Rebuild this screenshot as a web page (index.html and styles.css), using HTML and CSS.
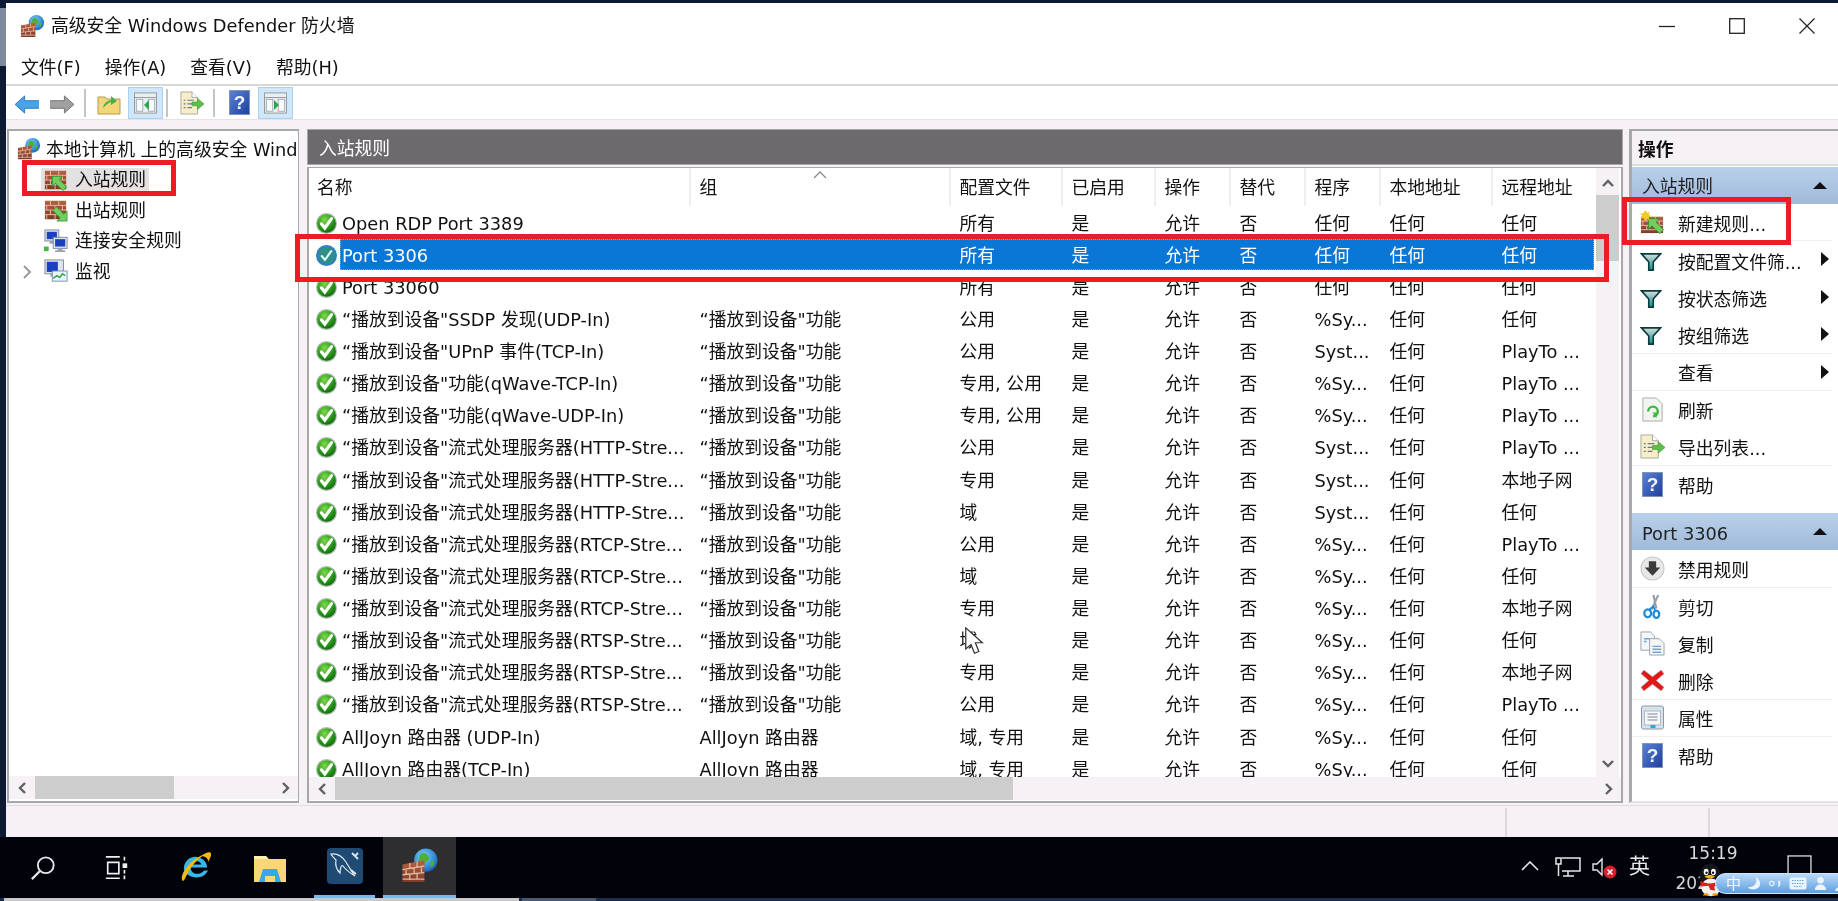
FILE: index.html
```html
<!DOCTYPE html>
<html lang="zh-CN">
<head>
<meta charset="utf-8">
<title>高级安全 Windows Defender 防火墙</title>
<link rel="stylesheet" href="styles.css">
</head>
<body>
<svg class="defs" width="0" height="0" aria-hidden="true">
  <defs>
    <radialGradient id="gc" cx="40%" cy="30%" r="75%"><stop offset="0" stop-color="#7fd84a"/><stop offset=".6" stop-color="#259a18"/><stop offset="1" stop-color="#0f6410"/></radialGradient>
    <radialGradient id="gg" cx="40%" cy="35%" r="70%"><stop offset="0" stop-color="#7fd6f0"/><stop offset=".7" stop-color="#2f86d8"/><stop offset="1" stop-color="#1c5aa8"/></radialGradient>
    <linearGradient id="gb" x1="0" y1="0" x2="0" y2="1"><stop offset="0" stop-color="#b9603f"/><stop offset="1" stop-color="#7c3b28"/></linearGradient>
    <linearGradient id="gh" x1="0" y1="0" x2="1" y2="1"><stop offset="0" stop-color="#5b83d6"/><stop offset="1" stop-color="#1d3f9c"/></linearGradient>
    <linearGradient id="gf" x1="0" y1="0" x2="0" y2="1"><stop offset="0" stop-color="#d8dfe0"/><stop offset="1" stop-color="#0f8a8a"/></linearGradient>
    <symbol id="check" viewBox="0 0 20 20">
      <circle cx="10" cy="10" r="10" fill="#aebbaa"/><circle cx="10" cy="10" r="8.900" fill="url(#gc)"/>
      <path d="M5.200 10.300l3.200 4 6.400-9" fill="none" stroke="#fff" stroke-width="3" stroke-linecap="round"/>
    </symbol>
    <symbol id="checksel" viewBox="0 0 20 20">
      <circle cx="10" cy="10" r="10" fill="#2f7fc4"/><circle cx="10" cy="10" r="8" fill="#2f8f88"/>
      <path d="M5.500 10.500l3 3.600 6-8.200" fill="none" stroke="#dff" stroke-width="2" stroke-linecap="round"/>
    </symbol>
    <symbol id="wall" viewBox="0 0 26 26">
      <circle cx="17" cy="9" r="8" fill="url(#gg)"/><path d="M13 5c3-2 5 0 6 2s-2 3-3 5-3 0-4-2z M20 10l3-1-1 4-2 1z" fill="#4fae3a"/>
      <path d="M1 12l15-3v15H1z" fill="url(#gb)"/>
      <path d="M1 15.500l15-2.500M1 19l15-1.500M1 22h15M6 11v4M11 10v4M3.500 15v4M9 14.500v4M14 14v4M6 18.500v4M11 18v4" stroke="#e0b8a2" stroke-width=".9" fill="none"/>
    </symbol>
    <symbol id="wallin" viewBox="0 0 26 26">
      <rect x="1" y="3" width="23" height="20" fill="url(#gb)"/>
      <path d="M1 8h23M1 13h23M1 18h23M7 3v5M16 3v5M3 8v5M12 8v5M20 8v5M7 13v5M16 13v5M3 18v5M12 18v5M20 18v5" stroke="#e4c0ac" stroke-width="1" fill="none"/>
      <path d="M9 9h11l-3.500 3.500 8 8-4 4-8-8L9 20z" fill="#6fd060" stroke="#2c8c2c" stroke-width=".8"/>
    </symbol>
    <symbol id="wallout" viewBox="0 0 26 26">
      <rect x="1" y="3" width="23" height="20" fill="url(#gb)"/>
      <path d="M1 8h23M1 13h23M1 18h23M7 3v5M16 3v5M3 8v5M12 8v5M20 8v5M7 13v5M16 13v5M3 18v5M12 18v5M20 18v5" stroke="#e4c0ac" stroke-width="1" fill="none"/>
      <path d="M25 25H14l3.500-3.500-8-8 4-4 8 8L25 14z" fill="#6fd060" stroke="#2c8c2c" stroke-width=".8"/>
    </symbol>
    <symbol id="wallnew" viewBox="0 0 26 26">
      <rect x="1" y="7" width="23" height="17" fill="url(#gb)"/>
      <path d="M1 11.500h23M1 16h23M1 20.500h23M7 7v4.500M16 7v4.500M3 11.500v4.500M12 11.500v4.500M20 11.500v4.500M7 16v4.500M16 16v4.500" stroke="#e4c0ac" stroke-width="1" fill="none"/>
      <path d="M9 9h11l-3.500 3.500 8 8-4 4-8-8L9 20z" fill="#6fd060" stroke="#2c8c2c" stroke-width=".8"/>
      <path d="M6 0l1.300 3.200L10.500 2 9 5l3 1.500-3 1.200 1 3-3.200-1.500L5 12 4 8.500 1 9l1.500-3L0 4l3.200-.5z" fill="#f5c928"/>
    </symbol>
    <symbol id="pcs" viewBox="0 0 26 26">
      <rect x="1" y="1" width="15" height="12" fill="#dfe6ee" stroke="#7c8694"/><rect x="3" y="3" width="11" height="8" fill="#1b3fc0"/><path d="M6 13h5v3H6z" fill="#9aa4b0"/>
      <rect x="10" y="9" width="15" height="12" fill="#dfe6ee" stroke="#7c8694"/><rect x="12" y="11" width="11" height="8" fill="#1b3fc0"/><path d="M15 21h5v2h3v2H12v-2h3z" fill="#9aa4b0"/>
      <rect x="0" y="19" width="5" height="5" fill="#46b548"/>
    </symbol>
    <symbol id="monitor" viewBox="0 0 26 26">
      <rect x="1" y="1" width="20" height="15" fill="#e0e6ec" stroke="#7c8694"/><rect x="3" y="3" width="12" height="11" fill="#1b3fc0"/><path d="M7 16h8v3H7z" fill="#9aa4b0"/>
      <rect x="9" y="13" width="16" height="11" fill="#eef4fa" stroke="#6a8fb8"/><path d="M10 21l4-3 3 2 3-4 3 2" fill="none" stroke="#2fa84a" stroke-width="1.600"/>
    </symbol>
    <symbol id="help" viewBox="0 0 21 25">
      <rect x=".5" y=".5" width="20" height="24" fill="url(#gh)" stroke="#7f93bd"/>
      <text x="10.500" y="19" font-family="Liberation Sans, sans-serif" font-size="19" font-weight="700" fill="#f1f4fb" text-anchor="middle">?</text>
    </symbol>
    <symbol id="export" viewBox="0 0 26 26">
      <path d="M1 1h12l6 6v18H1z" fill="#f7edc8" stroke="#a8a8a0"/><path d="M13 1v6h6" fill="#fff" stroke="#a8a8a0"/>
      <path d="M4 10h2M4 14h2M4 18h2M8 10h7M8 14h5M8 18h5" stroke="#6c7a86" stroke-width="1.300"/>
      <path d="M13 12h6V8l7 6-7 6v-4h-6z" fill="#5ac04a" stroke="#3f9e3c" stroke-width=".7"/>
    </symbol>
    <symbol id="filter" viewBox="0 0 24 20">
      <path d="M1.500 1h21l-8 9v9h-5v-9z" fill="url(#gf)" stroke="#0c3b3b" stroke-width="1.800"/>
    </symbol>
    <symbol id="refresh" viewBox="0 0 22 26">
      <path d="M1 1h14l6 6v18H1z" fill="#f2f4f2" stroke="#a8aca8"/>
      <path d="M6.500 15a5 5 0 1 1 5 5" fill="none" stroke="#3fb83f" stroke-width="2.500"/><path d="M11 16l5 0-1 6z" fill="#3fb83f"/>
    </symbol>
    <symbol id="disable" viewBox="0 0 24 24">
      <circle cx="12" cy="12" r="11" fill="#e8e8e8" stroke="#c4c4c4"/>
      <path d="M8.500 5h7v6h4l-7.500 8-7.500-8h4z" fill="#3c3c3c"/>
    </symbol>
    <symbol id="cut" viewBox="0 0 22 26">
      <path d="M17 1l-7 15M12 1l3 14" stroke="#9aa0a8" stroke-width="2.200" fill="none"/>
      <ellipse cx="6" cy="20" rx="3.500" ry="4" fill="none" stroke="#1f8bd8" stroke-width="2.400"/><ellipse cx="15" cy="21" rx="3" ry="3.800" fill="none" stroke="#1f8bd8" stroke-width="2.400"/><path d="M8 16l4-3 2 5" fill="none" stroke="#1f8bd8" stroke-width="2"/>
    </symbol>
    <symbol id="copy" viewBox="0 0 26 26">
      <path d="M1 1h10l4 4v15H1z" fill="#f5f6f8" stroke="#9aa0a8"/><path d="M10 8h10l5 5v12H10z" fill="#f5f6f8" stroke="#9aa0a8"/>
      <path d="M4 8h6M4 11h3M13 16h9M13 19h9M13 22h9" stroke="#6fa5d8" stroke-width="1.500"/>
    </symbol>
    <symbol id="del" viewBox="0 0 26 24">
      <path d="M4 1l9 7 9-7 3 4-8 7 8 7-3 4-9-7-9 7-3-4 8-7-8-7z" fill="#e01818" stroke="#b8b8b8" stroke-width=".8"/>
    </symbol>
    <symbol id="props" viewBox="0 0 24 25">
      <rect x="1" y="1" width="22" height="23" rx="2" fill="#d8e2ec" stroke="#8b97a4"/><rect x="4" y="6" width="16" height="14" fill="#f6f7f9" stroke="#b0b8c0"/>
      <path d="M7 9h10M7 12h10M7 15h10" stroke="#7d8894" stroke-width="1.200"/><rect x="10" y="20" width="5" height="3" fill="#2fa2e0"/>
    </symbol>
    <symbol id="nav" viewBox="0 0 26 20">
      <path d="M1 10L11 1v5h14a1 1 0 0 1 0 8H11v5z"/>
    </symbol>
    <symbol id="up" viewBox="0 0 24 24">
      <path d="M1 6h7l2 2h13v15H1z" fill="#f4d67a" stroke="#b89a48"/>
      <path d="M6 17c1-5 4-7 8-8V5l6 5-6 4v-3c-3 1-5 3-8 6z" fill="#46b04a"/>
    </symbol>
    <symbol id="pane" viewBox="0 0 26 24">
      <rect x="1" y="1" width="24" height="22" fill="#eceff2" stroke="#8c969f"/><path d="M1 6h24" stroke="#8c969f"/><rect x="3" y="8" width="7" height="13" fill="#f8f9fa" stroke="#a2aab2"/><rect x="16" y="8" width="7" height="13" fill="#f8f9fa" stroke="#a2aab2"/>
    </symbol>
  </defs>
</svg>

<div class="sliver"></div>

<main class="window">
  <header class="titlebar">
    <svg class="ic-title"><use href="#wall"/></svg>
    <span class="title">高级安全 Windows Defender 防火墙</span>
    <div class="winbtns">
      <svg class="wb" viewBox="0 0 16 16"><path d="M0 8.500h16" stroke="#222" stroke-width="1.300"/></svg>
      <svg class="wb" viewBox="0 0 16 16"><rect x=".7" y=".7" width="14.600" height="14.600" fill="none" stroke="#222" stroke-width="1.300"/></svg>
      <svg class="wb" viewBox="0 0 16 16"><path d="M.5.500l15 15M15.500.500l-15 15" stroke="#222" stroke-width="1.200"/></svg>
    </div>
  </header>
  <nav class="menubar"><span>文件(F)</span><span>操作(A)</span><span>查看(V)</span><span>帮助(H)</span></nav>
  <div class="toolbar">
    <svg class="t-nav t-back"><use href="#nav"/></svg>
    <svg class="t-nav t-fwd"><use href="#nav"/></svg>
    <i class="t-sep s1"></i>
    <svg class="t-ic t-up"><use href="#up"/></svg>
    <span class="t-on t-on1"><svg class="t-pane"><use href="#pane"/></svg><b class="tri-l"></b></span>
    <i class="t-sep s2"></i>
    <svg class="t-ic t-exp"><use href="#export"/></svg>
    <i class="t-sep s3"></i>
    <svg class="t-help"><use href="#help"/></svg>
    <span class="t-on t-on2"><svg class="t-pane"><use href="#pane"/></svg><b class="tri-r"></b></span>
  </div>

  <div class="main">
    <section class="tree">
      <div class="tree-body">
        <div class="node root"><svg class="ic24"><use href="#wall"/></svg><span>本地计算机 上的高级安全 Windows Defender 防火墙</span></div>
        <div class="node child"><span class="hl"><svg class="ic24"><use href="#wallin"/></svg><span>入站规则</span></span></div>
        <div class="node child"><span class="nh"><svg class="ic24"><use href="#wallout"/></svg><span>出站规则</span></span></div>
        <div class="node child"><span class="nh"><svg class="ic24"><use href="#pcs"/></svg><span>连接安全规则</span></span></div>
        <div class="node child"><svg class="expander" viewBox="0 0 10 16"><path d="M2 2l6 6-6 6" fill="none" stroke="#9a9a9a" stroke-width="2"/></svg><span class="nh"><svg class="ic24"><use href="#monitor"/></svg><span>监视</span></span></div>
      </div>
      <div class="hscroll">
        <svg class="arr" viewBox="0 0 10 14"><path d="M8 2L3 7l5 5" fill="none" stroke="#606060" stroke-width="2.400"/></svg>
        <div class="track"><div class="thumb thumb-l"></div></div>
        <svg class="arr" viewBox="0 0 10 14"><path d="M2 2l5 5-5 5" fill="none" stroke="#606060" stroke-width="2.400"/></svg>
      </div>
    </section>

    <section class="center">
      <div class="band">入站规则</div>
      <div class="listbox">
        <div class="listarea">
          <div class="table">
            <div class="row head">
              <span>名称</span>
              <span>组<svg class="caret" viewBox="0 0 14 8"><path d="M1 7l6-6 6 6" fill="none" stroke="#8c8c8c" stroke-width="1.300"/></svg></span>
              <span>配置文件</span><span>已启用</span><span>操作</span><span>替代</span><span>程序</span><span>本地地址</span><span>远程地址</span>
            </div>
            <div class="rows">
              <div class="row"><span class="nm"><svg class="chk"><use href="#check"/></svg>Open RDP Port 3389</span><span></span><span>所有</span><span>是</span><span>允许</span><span>否</span><span>任何</span><span>任何</span><span>任何</span></div>
              <div class="row sel"><span class="nm"><svg class="chk"><use href="#checksel"/></svg>Port 3306</span><span></span><span>所有</span><span>是</span><span>允许</span><span>否</span><span>任何</span><span>任何</span><span>任何</span></div>
              <div class="row"><span class="nm"><svg class="chk"><use href="#check"/></svg>Port 33060</span><span></span><span>所有</span><span>是</span><span>允许</span><span>否</span><span>任何</span><span>任何</span><span>任何</span></div>
              <div class="row"><span class="nm"><svg class="chk"><use href="#check"/></svg>“播放到设备"SSDP 发现(UDP-In)</span><span>“播放到设备"功能</span><span>公用</span><span>是</span><span>允许</span><span>否</span><span>%Sy...</span><span>任何</span><span>任何</span></div>
              <div class="row"><span class="nm"><svg class="chk"><use href="#check"/></svg>“播放到设备"UPnP 事件(TCP-In)</span><span>“播放到设备"功能</span><span>公用</span><span>是</span><span>允许</span><span>否</span><span>Syst...</span><span>任何</span><span>PlayTo ...</span></div>
              <div class="row"><span class="nm"><svg class="chk"><use href="#check"/></svg>“播放到设备"功能(qWave-TCP-In)</span><span>“播放到设备"功能</span><span>专用, 公用</span><span>是</span><span>允许</span><span>否</span><span>%Sy...</span><span>任何</span><span>PlayTo ...</span></div>
              <div class="row"><span class="nm"><svg class="chk"><use href="#check"/></svg>“播放到设备"功能(qWave-UDP-In)</span><span>“播放到设备"功能</span><span>专用, 公用</span><span>是</span><span>允许</span><span>否</span><span>%Sy...</span><span>任何</span><span>PlayTo ...</span></div>
              <div class="row"><span class="nm"><svg class="chk"><use href="#check"/></svg>“播放到设备"流式处理服务器(HTTP-Stre...</span><span>“播放到设备"功能</span><span>公用</span><span>是</span><span>允许</span><span>否</span><span>Syst...</span><span>任何</span><span>PlayTo ...</span></div>
              <div class="row"><span class="nm"><svg class="chk"><use href="#check"/></svg>“播放到设备"流式处理服务器(HTTP-Stre...</span><span>“播放到设备"功能</span><span>专用</span><span>是</span><span>允许</span><span>否</span><span>Syst...</span><span>任何</span><span>本地子网</span></div>
              <div class="row"><span class="nm"><svg class="chk"><use href="#check"/></svg>“播放到设备"流式处理服务器(HTTP-Stre...</span><span>“播放到设备"功能</span><span>域</span><span>是</span><span>允许</span><span>否</span><span>Syst...</span><span>任何</span><span>任何</span></div>
              <div class="row"><span class="nm"><svg class="chk"><use href="#check"/></svg>“播放到设备"流式处理服务器(RTCP-Stre...</span><span>“播放到设备"功能</span><span>公用</span><span>是</span><span>允许</span><span>否</span><span>%Sy...</span><span>任何</span><span>PlayTo ...</span></div>
              <div class="row"><span class="nm"><svg class="chk"><use href="#check"/></svg>“播放到设备"流式处理服务器(RTCP-Stre...</span><span>“播放到设备"功能</span><span>域</span><span>是</span><span>允许</span><span>否</span><span>%Sy...</span><span>任何</span><span>任何</span></div>
              <div class="row"><span class="nm"><svg class="chk"><use href="#check"/></svg>“播放到设备"流式处理服务器(RTCP-Stre...</span><span>“播放到设备"功能</span><span>专用</span><span>是</span><span>允许</span><span>否</span><span>%Sy...</span><span>任何</span><span>本地子网</span></div>
              <div class="row"><span class="nm"><svg class="chk"><use href="#check"/></svg>“播放到设备"流式处理服务器(RTSP-Stre...</span><span>“播放到设备"功能</span><span>域</span><span>是</span><span>允许</span><span>否</span><span>%Sy...</span><span>任何</span><span>任何</span></div>
              <div class="row"><span class="nm"><svg class="chk"><use href="#check"/></svg>“播放到设备"流式处理服务器(RTSP-Stre...</span><span>“播放到设备"功能</span><span>专用</span><span>是</span><span>允许</span><span>否</span><span>%Sy...</span><span>任何</span><span>本地子网</span></div>
              <div class="row"><span class="nm"><svg class="chk"><use href="#check"/></svg>“播放到设备"流式处理服务器(RTSP-Stre...</span><span>“播放到设备"功能</span><span>公用</span><span>是</span><span>允许</span><span>否</span><span>%Sy...</span><span>任何</span><span>PlayTo ...</span></div>
              <div class="row"><span class="nm"><svg class="chk"><use href="#check"/></svg>AllJoyn 路由器 (UDP-In)</span><span>AllJoyn 路由器</span><span>域, 专用</span><span>是</span><span>允许</span><span>否</span><span>%Sy...</span><span>任何</span><span>任何</span></div>
              <div class="row"><span class="nm"><svg class="chk"><use href="#check"/></svg>AllJoyn 路由器(TCP-In)</span><span>AllJoyn 路由器</span><span>域, 专用</span><span>是</span><span>允许</span><span>否</span><span>%Sy...</span><span>任何</span><span>任何</span></div>
            </div>
          </div>
          <div class="vscroll">
            <svg class="varr" viewBox="0 0 14 10"><path d="M2 8l5-5 5 5" fill="none" stroke="#606060" stroke-width="2.400"/></svg>
            <div class="vtrack"><div class="vthumb"></div></div>
            <svg class="varr" viewBox="0 0 14 10"><path d="M2 2l5 5 5-5" fill="none" stroke="#606060" stroke-width="2.400"/></svg>
          </div>
        </div>
        <div class="hscroll h-center">
          <svg class="arr" viewBox="0 0 10 14"><path d="M8 2L3 7l5 5" fill="none" stroke="#606060" stroke-width="2.400"/></svg>
          <div class="track"><div class="thumb thumb-c"></div></div>
          <svg class="arr" viewBox="0 0 10 14"><path d="M2 2l5 5-5 5" fill="none" stroke="#606060" stroke-width="2.400"/></svg>
        </div>
      </div>
    </section>

    <aside class="actions">
      <div class="act-head">操作</div>
      <div class="act-band">入站规则<i class="up-tri"></i></div>
      <div class="act sep"><svg class="ai"><use href="#wallnew"/></svg><span>新建规则...</span></div>
      <div class="act"><svg class="ai af"><use href="#filter"/></svg><span>按配置文件筛...</span><i class="more"></i></div>
      <div class="act"><svg class="ai af"><use href="#filter"/></svg><span>按状态筛选</span><i class="more"></i></div>
      <div class="act sep"><svg class="ai af"><use href="#filter"/></svg><span>按组筛选</span><i class="more"></i></div>
      <div class="act sep"><span class="ai"></span><span>查看</span><i class="more"></i></div>
      <div class="act"><svg class="ai"><use href="#refresh"/></svg><span>刷新</span></div>
      <div class="act sep"><svg class="ai"><use href="#export"/></svg><span>导出列表...</span></div>
      <div class="act"><svg class="ai"><use href="#help"/></svg><span>帮助</span></div>
      <div class="act-band band2">Port 3306<i class="up-tri"></i></div>
      <div class="act sep"><svg class="ai"><use href="#disable"/></svg><span>禁用规则</span></div>
      <div class="act"><svg class="ai"><use href="#cut"/></svg><span>剪切</span></div>
      <div class="act"><svg class="ai"><use href="#copy"/></svg><span>复制</span></div>
      <div class="act sep"><svg class="ai"><use href="#del"/></svg><span>删除</span></div>
      <div class="act sep"><svg class="ai"><use href="#props"/></svg><span>属性</span></div>
      <div class="act"><svg class="ai"><use href="#help"/></svg><span>帮助</span></div>
    </aside>
  </div>

  <footer class="status"><i class="s-a"></i><i class="s-b"></i></footer>

  <div class="mark mark-tree"></div>
  <div class="mark mark-row"></div>
  <div class="mark mark-act"></div>
  <svg class="cursor" viewBox="0 0 24 32"><path d="M2 1v24l6-5 4 10 5-2-4-10h8z" fill="#fff" stroke="#333" stroke-width="1.400"/></svg>
</main>

<div class="taskbar">
  <div class="task t-search"><svg viewBox="0 0 28 28"><circle cx="17" cy="11" r="8.500" fill="none" stroke="#e8e8e8" stroke-width="2"/><path d="M11 17L2 26" stroke="#e8e8e8" stroke-width="2.400"/></svg></div>
  <div class="task t-view"><svg viewBox="0 0 28 26"><path d="M2 1h15M2 24h15M4 7h12v12H4zM22 1v4M22 21v4" fill="none" stroke="#f0f0f0" stroke-width="1.800"/><rect x="20" y="8" width="5" height="5" fill="#f0f0f0"/><path d="M22 15v4" stroke="#f0f0f0" stroke-width="1.800"/></svg></div>
  <div class="task t-ie"><svg viewBox="0 0 36 36"><path d="M6 20a12 12 0 0 1 24-2H13c0 7 9 9 14 3h4a14 14 0 0 1-25-1z" fill="#38b6ec"/><path d="M13 15h11c-1-5-10-5-11 0z" fill="#000"/><path d="M5 32C0 26 14 6 34 2c-6 1-16 8-23 20-3 5-4 9-6 10zM24 6c5-4 10-5 10-2 0 2-1 5-3 8 0-3-2-5-7-6z" fill="#f2b90f"/></svg></div>
  <div class="task t-folder"><svg viewBox="0 0 34 30"><path d="M1 3h12l3 3h17v23H1z" fill="#f8d775"/><path d="M1 3h12l2 3H1z" fill="#fff0b8"/><path d="M10 16h14l4 13h-6v-6h-10v6H6z" fill="#39a8e8"/></svg></div>
  <div class="task t-mysql"><svg viewBox="0 0 36 36"><rect width="36" height="36" rx="4" fill="#1e4a73"/><path d="M4 6c6-1 11 2 15 8 3 5 5 9 9 14-5-3-9-6-12-10-2-2-3 4-3 7-4-4-5-8-4-13-2-2-4-4-5-6z" fill="none" stroke="#dfe8f0" stroke-width="1.200"/><path d="M25 5l6 6M31 5l-3 3M24 22l5 4" stroke="#dfe8f0" stroke-width="1.800"/></svg></div>
  <div class="task t-fw"><svg><use href="#wall"/></svg></div>
  <div class="tray">
    <svg class="tr tr-chev" viewBox="0 0 18 10"><path d="M1 9l8-8 8 8" fill="none" stroke="#e8e8e8" stroke-width="1.600"/></svg>
    <svg class="tr tr-net" viewBox="0 0 26 20"><path d="M7 1h18v13H7M1 1h5v6H1zM3.500 7v12M13 14v5M8 19h11" fill="none" stroke="#e8e8e8" stroke-width="1.500"/></svg>
    <svg class="tr tr-vol" viewBox="0 0 26 22"><path d="M1 7h4l5-5v16l-5-5H1z" fill="none" stroke="#e8e8e8" stroke-width="1.400"/><circle cx="18" cy="15" r="6.500" fill="#d8202c"/><path d="M15.500 12.500l5 5m0-5l-5 5" stroke="#fff" stroke-width="1.500"/></svg>
    <span class="ime">英</span>
    <div class="clock"><span>15:19</span><span class="date">2020/</span></div>
    <svg class="desk" viewBox="0 0 26 22"><rect x="1" y="1" width="24" height="20" fill="none" stroke="#e8e8e8" stroke-width="1.300"/></svg>
    <svg class="qq" viewBox="0 0 30 42"><ellipse cx="14" cy="15" rx="13" ry="14" fill="#15151c"/><ellipse cx="15" cy="30" rx="12" ry="11" fill="#f2f2f2"/><ellipse cx="9" cy="11" rx="3" ry="4" fill="#fff"/><ellipse cx="18" cy="11" rx="3" ry="4" fill="#fff"/><circle cx="9.500" cy="12" r="1.500" fill="#111"/><circle cx="17.500" cy="12" r="1.500" fill="#111"/><path d="M7 17c4-3 9-3 13 0-4 3-9 3-13 0z" fill="#f5b21a"/><path d="M2 22c8 5 16 4 24 0l1 5-8 2 1 5-6-1-2-5-10 1z" fill="#d8201c"/><path d="M5 40c2-4 6-4 8 0zM16 40c2-4 6-4 8 0z" fill="#f5a015"/></svg>
    <div class="imebar">
      <span class="im-z">中</span>
      <svg class="im" viewBox="0 0 16 16"><path d="M9 1c3 6-1 11-8 11 3 4 13 3 13-4 0-3-2-6-5-7z" fill="#eaf4ff"/></svg>
      <svg class="im" viewBox="0 0 16 16"><circle cx="4" cy="8" r="2.300" fill="none" stroke="#eaf4ff" stroke-width="1.200"/><path d="M11 5h2v5l-2 2z" fill="#eaf4ff"/></svg>
      <svg class="im im-k" viewBox="0 0 18 14"><rect x=".5" y="1" width="17" height="12" rx="2" fill="#eaf4ff"/><path d="M3 4h12M3 7h12M5 10h8" stroke="#6ea6de" stroke-dasharray="1.500 1"/></svg>
      <svg class="im" viewBox="0 0 16 16"><circle cx="8" cy="4.500" r="3.500" fill="#eaf4ff"/><path d="M2 15c0-8 12-8 12 0z" fill="#eaf4ff"/></svg>
      <svg class="im" viewBox="0 0 16 16"><path d="M1 15l7-7c-1-4 2-7 6-6l-3 3 2 2 3-2c0 4-3 6-6 5l-7 7z" fill="#eaf4ff"/></svg>
    </div>
  </div>
</div>
<div class="strip"><i class="st-a"></i><i class="st-b"></i></div>
</body>
</html>
```

FILE: styles.css
```css
* { box-sizing: border-box; }
html, body { margin: 0; height: 100%; }
body {
  width: 1838px;
  height: 901px;
  overflow: hidden;
  background: #0c1b33;
  padding-top: 3px;
  font: 17.8px/1.2 "DejaVu Sans", "Noto Sans CJK SC", sans-serif;
  color: #111;
  filter: blur(0.5px);
  display: flex;
  flex-direction: column;
  position: relative;
}
.defs { position: absolute; }
svg { display: block; flex: none; }
.sliver { position: absolute; left: 0; top: 8px; width: 6px; height: 58px; background: #7f8b9c; }

.window {
  position: relative;
  margin-left: 6px;
  width: 1832px;
  height: 834px;
  flex: none;
  background: #f5f1f5;
  display: flex;
  flex-direction: column;
}
.titlebar {
  height: 46px;
  background: #fff;
  display: flex;
  align-items: center;
  padding-left: 14px;
}
.ic-title { width: 25px; height: 25px; margin-right: 6px; }
.winbtns { margin-left: auto; display: flex; gap: 54px; padding-right: 23px; }
.wb { width: 16px; height: 16px; }
.menubar {
  height: 37px;
  background: #fff;
  border-bottom: 2px solid #d8d8d8;
  display: flex;
  align-items: center;
  padding: 3px 0 0 15px;
  gap: 24px;
}
.toolbar {
  height: 34px;
  background: #fff;
  border-bottom: 1px solid #e4e4e4;
  display: flex;
  align-items: center;
}
.t-nav { width: 25px; height: 19px; margin-top: 3px; }
.t-back { margin-left: 8px; fill: #4aa3e6; stroke: #2a78c0; }
.t-fwd { margin-left: 11px; fill: #a0a0a0; stroke: #707070; transform: scaleX(-1); }
.t-sep { width: 2px; height: 28px; background: #c4c4c4; flex: none; }
.s1 { margin-left: 9px; }
.t-ic { width: 24px; height: 24px; }
.t-up { margin-left: 11px; }
.t-on { width: 35px; height: 32px; background: #cfe6fb; border: 1px solid #a8d2f4; display: flex; align-items: center; justify-content: center; position: relative; flex: none; }
.t-on1 { margin-left: 7px; }
.t-pane { width: 25px; height: 22px; }
.tri-l, .tri-r { position: absolute; top: 12px; left: 15px; width: 0; height: 0; border: 5px solid transparent; }
.tri-l { border-right-color: #2aa84a; border-left: 0; }
.tri-r { border-left-color: #2aa84a; border-right: 0; }
.s2 { margin-left: 3px; }
.t-exp { margin-left: 12px; }
.s3 { margin-left: 9px; }
.t-help { width: 21px; height: 25px; margin-left: 14px; }
.t-on2 { margin-left: 8px; }

.main {
  height: 685px;
  padding-top: 9px;
  display: flex;
  flex: none;
  line-height: 1.3;
}
.tree {
  width: 292px;
  height: 674px;
  margin-left: 1px;
  background: #fff;
  border: 2px solid #a8a8a8;
  border-right-width: 1px;
  display: flex;
  flex-direction: column;
}
.tree-body { flex: 1; overflow: hidden; padding-top: 3px; }
.node { height: 30.5px; display: flex; align-items: center; white-space: nowrap; overflow: hidden; }
.root { padding-left: 8px; gap: 5px; }
.ic24 { width: 24px; height: 24px; }
.child { padding-left: 32px; position: relative; }
.hl, .nh { display: flex; align-items: center; gap: 7px; height: 24px; padding: 0 3px; }
.hl { background: #e2e2e2; }
.expander { position: absolute; left: 13px; top: 8px; width: 10px; height: 16px; }
.hscroll { height: 23px; margin-bottom: 2px; display: flex; align-items: center; background: #f5f1f5; flex: none; }
.arr { width: 14px; height: 14px; flex: none; margin: 0 1px 0 0; }
.hscroll .arr:first-child { margin-left: 6px; margin-right: 6px; }
.hscroll .arr:last-child { margin-right: 5px; }
.track { flex: 1; height: 100%; }
.thumb { height: 100%; background: #cdcdcd; }
.thumb-l { width: 139px; }
.thumb-c { width: 678px; }

.center { width: 1316px; margin-left: 8px; flex: none; display: flex; flex-direction: column; height: 674px; }
.band {
  height: 36px;
  background: #6d6a6e;
  border: 1px solid #a8a8a8;
  color: #fff;
  display: flex;
  align-items: center;
  padding: 3px 0 0 11px;
  flex: none;
}
.listbox {
  margin-top: 2px;
  flex: 1;
  min-height: 0;
  background: #fff;
  border: 2px solid #a8a8a8;
  border-top-width: 1px;
  display: flex;
  flex-direction: column;
}
.listarea { flex: 1; min-height: 0; display: flex; overflow: hidden; }
.table { width: 1287px; flex: none; overflow: hidden; }
.row {
  display: grid;
  grid-template-columns: 382px 260px 112px 93px 75px 75px 75px 112px 103px;
  height: 32.14px;
  align-items: center;
  white-space: nowrap;
  position: relative;
}
.row > span { padding: 2px 0 0 8.5px; position: relative; }
.rows .row > span:first-child { padding-left: 8px; }
.head { height: 38px; }
.head > span { height: 38px; display: flex; align-items: center; border-right: 2px solid #efefef; position: relative; }
.head > span:first-child { padding-left: 8px; }
.head > span:last-child { border-right: 0; }
.caret { position: absolute; left: 122px; top: 3px; width: 14px; height: 8px; }
.nm { display: flex; align-items: center; gap: 5px; }
.chk { width: 21px; height: 21px; margin-left: -1px; }
.sel { color: #fff; }
.sel::before {
  content: "";
  position: absolute;
  left: 31px;
  right: 2px;
  top: 1px;
  bottom: 0;
  background: #0a76d6;
  border: 1px dotted #e8963c;
}
.vscroll { width: 23px; flex: none; background: #f5f1f5; display: flex; flex-direction: column; margin-right: 4px; }
.varr { width: 14px; height: 10px; margin: 10px auto 7px; flex: none; }
.vscroll .varr:last-child { margin: 9px auto 8px; }
.vtrack { flex: 1; }
.vthumb { height: 66px; background: #cdcdcd; }
.h-center { margin-bottom: 1px; }

.actions { flex: 1; margin-left: 6px; height: 674px; background: #fff; border-left: 3px solid #a8a8a8; border-top: 2px solid #a8a8a8; border-bottom: 2px solid #e4e0e4; }
.act-head { height: 35px; background: #f5f1f5; border-bottom: 2px solid #dcdcdc; display: flex; align-items: center; padding: 4px 0 0 6px; font-weight: 700; margin-bottom: 1px; }
.act-band {
  height: 37px;
  background: linear-gradient(#b9d0ea, #9fbad9);
  display: flex;
  align-items: center;
  padding: 3px 0 0 10px;
  position: relative;
  color: #222;
}
.band2 { margin-top: 10px; }
.up-tri { position: absolute; right: 11px; top: 15px; width: 0; height: 0; border: 7px solid transparent; border-top: 0; border-bottom: 7px solid #111; }
.act { height: 37.4px; display: flex; align-items: center; padding-left: 8px; margin-right: 6px; position: relative; }
.act > span:not(.ai) { padding-top: 4px; }
.ai { width: 25px; height: 25px; margin-right: 13px; flex: none; }
.af { width: 22px; height: 18px; margin-right: 16px; margin-top: 4px; }
.sep { border-bottom: 1px solid #f0eef0; }
.more { position: absolute; right: 3px; top: 11px; width: 0; height: 0; border: 7px solid transparent; border-right: 0; border-left: 8px solid #111; }

.status { flex: 1; position: relative; border-top: 1px solid #e0dce0; }
.s-a, .s-b { position: absolute; top: 2px; bottom: 0; width: 2px; background: #dcd8dc; }
.s-a { left: 1499px; }
.s-b { left: 1702px; }

.mark { position: absolute; border: 5px solid #ed1c24; pointer-events: none; }
.mark-tree { left: 16px; top: 157px; width: 154px; height: 36px; }
.mark-row { left: 289px; top: 231px; width: 1314px; height: 48px; }
.mark-act { left: 1616px; top: 194px; width: 169px; height: 48px; }
.cursor { position: absolute; left: 958px; top: 624px; width: 21px; height: 28px; }

.taskbar {
  height: 61px;
  flex: none;
  background: #02030a;
  display: flex;
  align-items: center;
  position: relative;
  color: #e8e8e8;
}
.task { height: 100%; display: flex; align-items: center; justify-content: center; flex: none; }
.t-search { width: 74px; margin-left: 6px; }
.t-search svg { width: 26px; height: 26px; }
.t-view { width: 74px; }
.t-view svg { width: 26px; height: 26px; }
.t-ie { width: 74px; margin-left: 4px; }
.t-ie svg { width: 35px; height: 35px; }
.t-folder { width: 76px; }
.t-folder svg { width: 34px; height: 30px; }
.t-mysql { width: 61px; margin-left: 6px; border-bottom: 3px solid #76b9ed; }
.t-mysql svg { width: 36px; height: 36px; }
.t-fw { width: 73px; margin-left: 8px; background: #2e2e30; border-bottom: 3px solid #76b9ed; }
.t-fw svg { width: 38px; height: 38px; }
.tray { flex: 1; height: 100%; position: relative; }
.tr, .ime, .clock, .desk, .imebar, .qq { position: absolute; }
.tr-chev { left: 1065px; top: 24px; width: 18px; height: 10px; }
.tr-net { left: 1099px; top: 20px; width: 26px; height: 20px; }
.tr-vol { left: 1136px; top: 20px; width: 26px; height: 22px; }
.ime { left: 1173px; top: 17px; font-size: 21px; line-height: 25px; }
.clock { left: 1212px; top: 6px; width: 90px; display: flex; flex-direction: column; align-items: center; gap: 10px; font-size: 17px; color: #d8d8d8; line-height: 20px; }
.date { margin-right: 26px; }
.desk { left: 1331px; top: 18px; width: 25px; height: 21px; }
.qq { left: 1242px; top: 26px; width: 26px; height: 34px; }
.imebar {
  left: 1259px;
  top: 36px;
  width: 123px;
  height: 21px;
  background: linear-gradient(#b8d8f8, #5f9fe0);
  border: 1px solid #cfe6ff;
  border-right: 0;
  border-radius: 11px 0 0 11px;
  display: flex;
  align-items: center;
  padding-left: 10px;
  gap: 6px;
  font-size: 15px;
  line-height: 1.2;
  color: #f4faff;
}
.im { width: 15px; height: 15px; }
.im-k { width: 18px; }

.strip { flex: 1; background: #1b2d4d; display: flex; }
.st-a { width: 515px; margin-left: 4px; background: #c9c9c9; }
.st-b { width: 74px; margin-left: 3px; background: #4a5a75; }
```
